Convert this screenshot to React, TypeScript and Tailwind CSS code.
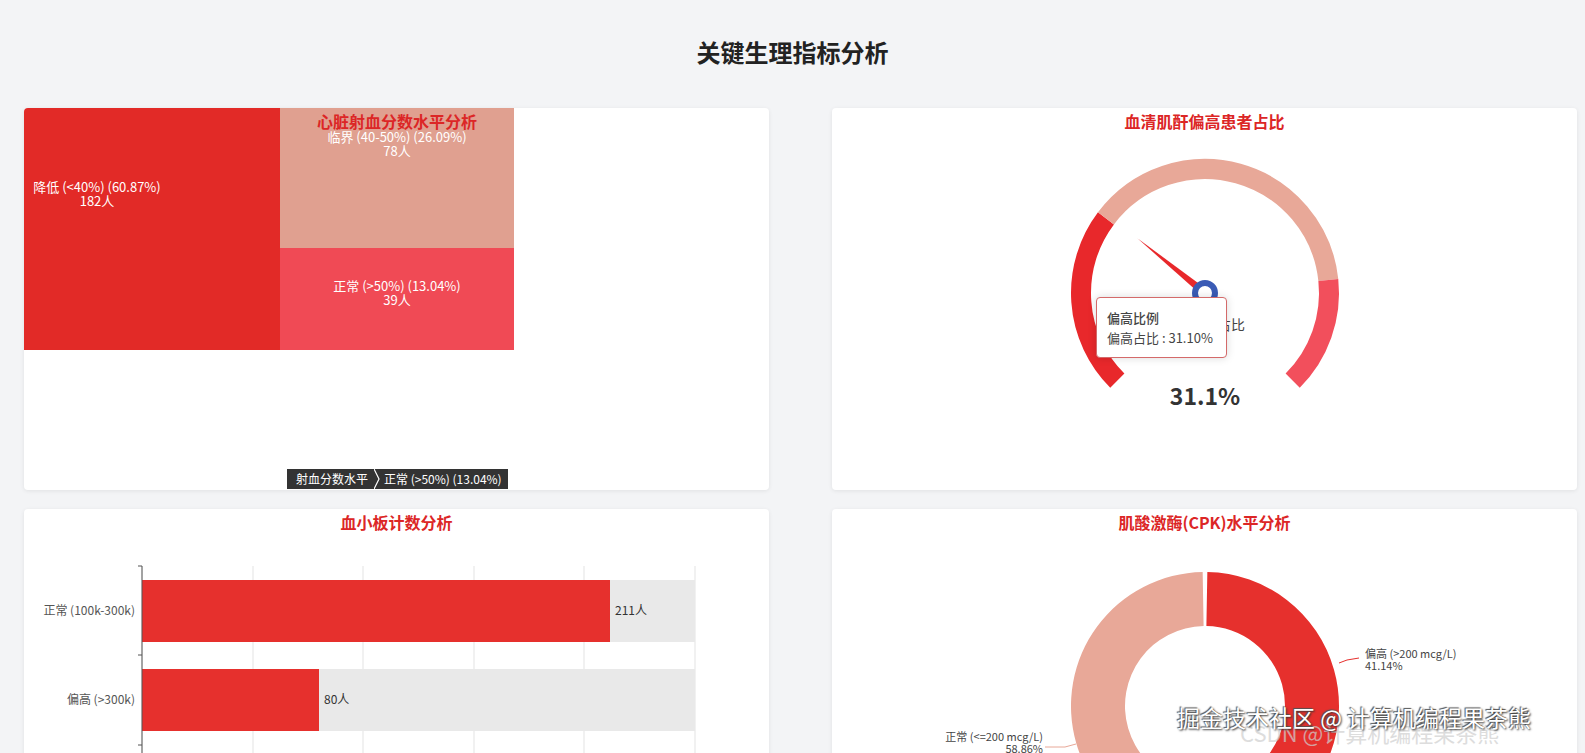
import React from "react";

const pt = (cx: number, cy: number, r: number, deg: number) => {
  const a = (deg * Math.PI) / 180;
  return [cx + r * Math.cos(a), cy - r * Math.sin(a)];
};
const arc = (cx: number, cy: number, r: number, a1: number, a2: number) => {
  const [x1, y1] = pt(cx, cy, r, a1);
  const [x2, y2] = pt(cx, cy, r, a2);
  const large = a1 - a2 > 180 ? 1 : 0;
  return `M${x1} ${y1} A${r} ${r} 0 ${large} 1 ${x2} ${y2}`;
};
const ring = (cx: number, cy: number, R: number, r: number, a1: number, a2: number) => {
  const [x1, y1] = pt(cx, cy, R, a1);
  const [x2, y2] = pt(cx, cy, R, a2);
  const [x3, y3] = pt(cx, cy, r, a2);
  const [x4, y4] = pt(cx, cy, r, a1);
  const large = a1 - a2 > 180 ? 1 : 0;
  return `M${x1} ${y1} A${R} ${R} 0 ${large} 1 ${x2} ${y2} L${x3} ${y3} A${r} ${r} 0 ${large} 0 ${x4} ${y4}Z`;
};

const font = { fontFamily: '"Noto Sans CJK SC", "Noto Sans", sans-serif' };

function Treemap() {
  return (
    <div className="relative h-full w-full">
      <div className="flex h-[242px] w-[490px]">
        <div className="w-[256px] bg-[#e22a27] pt-[72px] text-center text-[13px] leading-[14px] text-white">
          <div className="pr-[110px]">降低 (&lt;40%) (60.87%)</div>
          <div className="pr-[110px]">182人</div>
        </div>
        <div className="flex flex-1 flex-col">
          <div className="h-[140px] bg-[#e0a090] pt-[22px] text-center text-[13px] leading-[14px] text-white">
            <div>临界 (40-50%) (26.09%)</div>
            <div>78人</div>
          </div>
          <div className="flex flex-1 flex-col justify-center bg-[#f04a55] pb-[12px] text-center text-[13px] leading-[14px] text-white">
            <div>正常 (&gt;50%) (13.04%)</div>
            <div>39人</div>
          </div>
        </div>
      </div>
      <div className="absolute left-[256px] top-[1px] w-[234px] text-center text-[16px] font-bold text-[#dc2626]">心脏射血分数水平分析</div>
      <div className="absolute left-[263px] top-[361px] flex h-[20px] items-stretch text-[12px] text-white">
        <div className="flex items-center bg-[#333] pl-[9px] pr-[6px]">射血分数水平</div>
        <svg width="8" height="20" className="bg-[#333]"><path d="M0 0 L5 10 L0 20" fill="none" stroke="#fff" strokeWidth="1.2" /></svg>
        <div className="flex items-center bg-[#333] pr-[6px] pl-[2px]">正常 (&gt;50%) (13.04%)</div>
      </div>
    </div>
  );
}

function Gauge() {
  const cx = 373, cy = 185, r = 124;
  const [tx, ty] = pt(cx, cy, 87, 141);
  const [b1x, b1y] = pt(cx, cy, 4, 51);
  const [b2x, b2y] = pt(cx, cy, 4, 231);
  return (
    <div className="relative h-full w-full">
      <div className="pt-[1px] text-center text-[16px] font-bold text-[#dc2626]">血清肌酐偏高患者占比</div>
      <svg className="absolute left-0 top-0" width="745" height="382">
        <path d={arc(cx, cy, r, 225, 143)} stroke="#e8282b" strokeWidth="20" fill="none" />
        <path d={arc(cx, cy, r, 143, 6)} stroke="#e8a898" strokeWidth="20" fill="none" />
        <path d={arc(cx, cy, r, 6, -45)} stroke="#f24f5c" strokeWidth="20" fill="none" />
        <polygon points={`${tx},${ty} ${b1x},${b1y} ${b2x},${b2y}`} fill="#e8282b" />
        <circle cx={cx} cy={cy} r="10" fill="#fff" stroke="#3a5bb5" strokeWidth="6" />
        <text x={cx + 12} y={cy + 37} fontSize="14" fill="#444" textAnchor="middle">偏高占比</text>
        <text x={cx} y={cy + 112} fontSize="23" fontWeight="bold" fill="#333" textAnchor="middle">31.1%</text>
      </svg>
      <div className="absolute left-[264px] top-[189px] h-[61px] w-[131px] rounded-[4px] border border-[#d46a6a] bg-white px-[10px] pt-[10px] text-[13px] leading-[20px] text-[#444] shadow-[0_0_8px_rgba(0,0,0,0.15)]">
        <div className="font-medium">偏高比例</div>
        <div>偏高占比 : 31.10%</div>
      </div>
    </div>
  );
}

function Bars() {
  const grid = [118, 229, 339, 450, 560, 671];
  return (
    <div className="relative h-full w-full">
      <div className="pt-[1px] text-center text-[16px] font-bold text-[#dc2626]">血小板计数分析</div>
      <svg className="absolute left-0 top-0" width="745" height="382">
        {grid.map((x) => <line key={x} x1={x} y1="57" x2={x} y2="382" stroke="#e3e3e3" />)}
        <rect x="118" y="71" width="553" height="62" fill="#e9e9e9" />
        <rect x="118" y="71" width="468" height="62" fill="#e6302d" />
        <rect x="118" y="160" width="553" height="62" fill="#e9e9e9" />
        <rect x="118" y="160" width="177" height="62" fill="#e6302d" />
        <line x1="118" y1="57" x2="118" y2="382" stroke="#555" />
        {[57, 146, 236].map((y) => <line key={y} x1="114" y1={y} x2="118" y2={y} stroke="#555" />)}
        <text x="111" y="106" fontSize="12" fill="#555" textAnchor="end">正常 (100k-300k)</text>
        <text x="111" y="195" fontSize="12" fill="#555" textAnchor="end">偏高 (&gt;300k)</text>
        <text x="591" y="106" fontSize="12" fill="#333">211人</text>
        <text x="300" y="195" fontSize="12" fill="#333">80人</text>
      </svg>
    </div>
  );
}

function Donut() {
  const cx = 373, cy = 197, R = 134, r = 80;
  const split = 90 - 0.4114 * 360;
  return (
    <div className="relative h-full w-full">
      <div className="pt-[1px] text-center text-[16px] font-bold text-[#dc2626]">肌酸激酶(CPK)水平分析</div>
      <svg className="absolute left-0 top-0" width="745" height="382">
        <path d={ring(cx, cy, R, r, 89, split + 0.5)} fill="#e6302d" />
        <path d={ring(cx, cy, R, r, split - 0.5, -269)} fill="#e8a898" />
        <polyline points="507,154 515,151 527,149" fill="none" stroke="#e6302d" />
        <polyline points="244,235 233,238 213,238" fill="none" stroke="#e8a898" />
        <text x="533" y="149" fontSize="11" fill="#444">偏高 (&gt;200 mcg/L)</text>
        <text x="533" y="161" fontSize="11" fill="#444">41.14%</text>
        <text x="211" y="232" fontSize="11" fill="#444" textAnchor="end">正常 (&lt;=200 mcg/L)</text>
        <text x="211" y="244" fontSize="11" fill="#444" textAnchor="end">58.86%</text>
      </svg>
    </div>
  );
}

export default function App() {
  return (
    <div className="relative h-[753px] w-[1585px] overflow-hidden bg-[#f3f4f6]" style={font}>
      <h1 className="pt-[34px] pb-[38px] text-center text-[24px] font-bold leading-[36px] text-[#222]">关键生理指标分析</h1>
      <div className="grid grid-cols-[745px_745px] gap-x-[63px] gap-y-[19px] pl-[24px]">
        {[<Treemap key="t" />, <Gauge key="g" />, <Bars key="b" />, <Donut key="d" />].map((c, i) => (
          <div key={i} className="h-[382px] overflow-hidden rounded-[4px] bg-white shadow-[0_1px_4px_rgba(0,0,0,0.08)]">{c}</div>
        ))}
      </div>
      <div className="absolute left-[1240px] top-[716px] text-[22px] text-[#cfcfcf] opacity-70">CSDN @计算机编程果茶熊</div>
      <div className="absolute left-[1177px] top-[700px] text-[23px] text-white [text-shadow:1px_1px_2px_#333,-1px_-1px_1px_#555]">掘金技术社区 @ 计算机编程果茶熊</div>
    </div>
  );
}
